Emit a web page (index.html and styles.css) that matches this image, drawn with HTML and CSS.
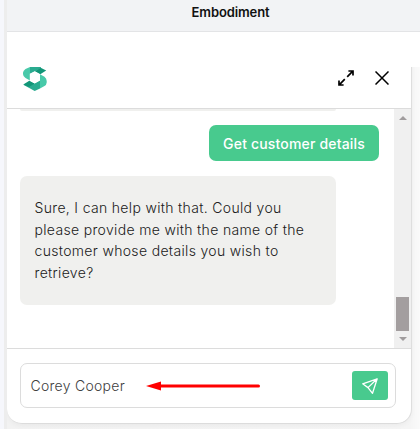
FILE: index.html
```html
<!DOCTYPE html>
<html lang="en">
<head>
<meta charset="utf-8">
<title>Chat</title>
<link rel="stylesheet" href="styles.css">
</head>
<body>
<div class="page">
  <div class="gutter"></div>
  <main class="content">
    <header class="topbar"><span class="topbar-title">Embodiment</span></header>
    <div class="stage">
      <section class="chat">
        <header class="chat-header">
          <svg class="logo" viewBox="0 0 24 24">
            <path fill="#48c9a9" d="M7 0V13.6L2.5 11Q0 9.5 0 7V5.5Q.3 3.5 2.5 2Z"/>
            <path fill="#2aab90" d="M7 0H17Q18.5.2 18 1L11.7 4.5 7 7Z"/>
            <path fill="#129678" d="M11.7 4.2 17.7.7 23.2 3.5 17.3 7.3Z"/>
            <path fill="#48c9a9" d="M17 7.2 21.5 9.8Q23.7 11.5 23.7 14V15.5Q23.5 18 21.5 19L17 21.5Z"/>
            <path fill="#2aab90" d="M.3 17.7 11.7 16.3 17 13.2V21.5L11.7 24Z"/>
            <path fill="#129678" d="M.3 17.5 6.3 13.8 11.7 16.5 5.9 20.1Z"/>
            <path fill="#fff" d="M11.7 4.2 17 7.2V13.5L11.7 16.6 6.8 13.6V6.8Z"/>
          </svg>
          <div class="actions">
            <svg class="expand" viewBox="0 0 16 16" fill="none" stroke="#000" stroke-width="1.7">
              <path d="M9.2 6.8 14.8 1.2M10.4 1H15V5.6M6.8 9.2 1.2 14.8M1 10.4V15H5.6"/>
            </svg>
            <svg class="close" viewBox="0 0 14 14" fill="none" stroke="#000" stroke-width="1.5">
              <path d="M.5.5 13.5 13.5M13.5.5.5 13.5"/>
            </svg>
          </div>
        </header>
        <div class="chat-body">
          <div class="messages">
            <div class="bubble previous"></div>
            <div class="bubble user">Get customer details</div>
            <div class="bubble bot">Sure, I can help with that. Could you<br>please provide me with the name of the<br>customer whose details you wish to<br>retrieve?</div>
          </div>
          <div class="scrollbar">
            <div class="arrow up"></div>
            <div class="thumb"></div>
            <div class="arrow down"></div>
          </div>
        </div>
        <footer class="chat-footer">
          <div class="field">
            <span class="value">Corey Cooper</span>
            <svg class="pointer" viewBox="0 0 115 10">
              <path d="M14 5H112.5" stroke="#f00" stroke-width="3" stroke-linecap="round"/>
              <path d="M0 5 15 .5V9.5Z" fill="#f00"/>
            </svg>
            <div class="send">
              <svg viewBox="0 0 16 16" fill="none" stroke="#fff" stroke-width="1.3" stroke-linejoin="round">
                <path d="M15.2.8.7 5.8 6 9.6 10.5 15.3ZM15.2.8 6 9.6"/>
              </svg>
            </div>
          </div>
        </footer>
      </section>
    </div>
  </main>
</div>
</body>
</html>
```
FILE: styles.css
```css
* { box-sizing: border-box; }
body { margin: 0; font-family: Inter, "Liberation Sans", sans-serif; overflow: hidden; }
svg { display: block; }
.page { display: flex; width: 420px; height: 429px; background: #fff; }
.gutter { flex: none; width: 7px; background: #f6f7fc; border-right: 3px solid #ededed; }
.content { flex: 1; min-width: 0; display: flex; flex-direction: column; }
.topbar { height: 32px; flex: none; background: #f2f3f5; border-bottom: 1px solid #e3e4e6; padding: 4px 0 0 184.5px; }
.topbar-title { display: block; font-size: 13px; line-height: 17px; font-weight: 600; letter-spacing: -.1px; color: #111; }
.stage { flex: 1; padding-right: 8px; background: linear-gradient(#fff 35px, transparent 35px), linear-gradient(90deg, #f2f2f2, #f5f5f5 403px, #fafafa); }
.chat { width: 405px; height: 392px; display: flex; flex-direction: column; background: #fff; border-right: 1px solid #dedede; border-bottom: 1px solid #dcdcdc; border-radius: 0 0 15px 15px; box-shadow: 0 2px 5px rgba(0,0,0,.04); clip-path: inset(35px -8px -8px 0); }
.chat-header { flex: none; height: 77px; display: flex; justify-content: space-between; padding: 35px 22px 0 16px; border-bottom: 1px solid #dcdcdc; }
.logo { width: 24px; height: 24px; }
.actions { display: flex; gap: 21px; padding-top: 3px; }
.expand { width: 16px; height: 16px; }
.close { width: 14px; height: 14px; margin-top: 1px; }
.chat-body { flex: none; height: 239px; display: flex; }
.messages { flex: 1; display: flex; flex-direction: column; padding: 0 15px 0 13px; }
.bubble { border-radius: 7px; font-size: 14px; }
.previous { width: 316px; height: 2px; border-radius: 0 0 7px 7px; background: #f0f0ee; }
.user { align-self: flex-end; width: 170px; height: 36px; margin-top: 14px; line-height: 38px; text-align: center; white-space: nowrap; font-weight: 500; letter-spacing: .17px; color: #fff; background: #48ca8e; }
.bot { width: 316px; height: 129px; margin-top: 15px; padding: 21px 0 0 14.5px; line-height: 21.7px; font-weight: 350; letter-spacing: .33px; white-space: nowrap; color: #202020; background: #f0f0ee; }
.scrollbar { width: 17px; display: flex; flex-direction: column; align-items: center; background: #f0f0f0; }
.arrow { width: 0; height: 0; border: 4px solid transparent; }
.up { margin-top: 3px; border-bottom-color: #a09c9d; }
.thumb { width: 13px; height: 34px; margin-top: 177px; background: #a39e9f; }
.down { margin-top: 6px; border-top-color: #a09c9d; }
.chat-footer { flex: none; height: 75px; border-top: 1px solid #dcdcdc; padding: 14px 15px 0 13px; }
.field { height: 45px; display: flex; align-items: center; border: 1px solid #dcdcdc; border-radius: 7px; padding: 0 7px 0 9.5px; }
.value { width: 95px; white-space: nowrap; font-size: 14px; font-weight: 350; letter-spacing: .27px; color: #404040; }
.pointer { width: 115px; height: 10px; margin-left: 20.5px; }
.send { margin-left: auto; width: 36px; height: 29px; border-radius: 3px; background: #48ca8e; display: flex; align-items: center; justify-content: center; }
.send svg { width: 16px; height: 16px; }
```
